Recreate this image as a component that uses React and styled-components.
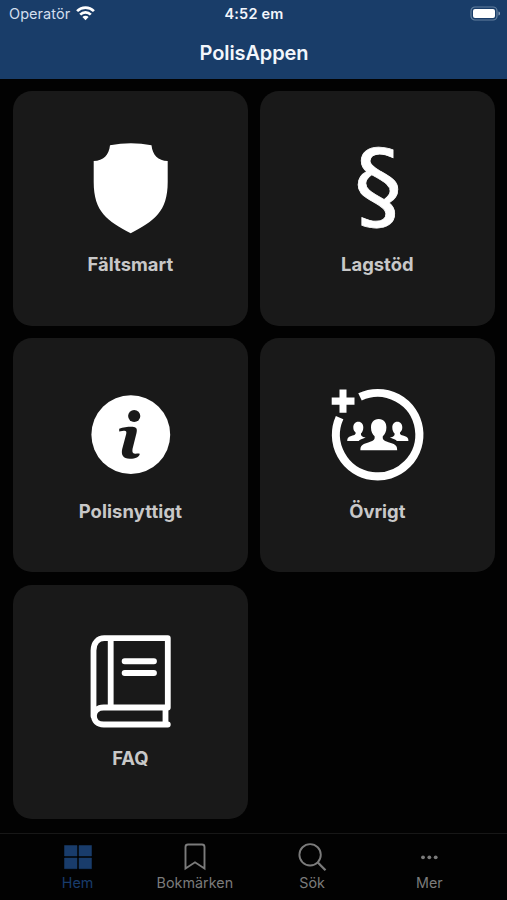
import React from "react";
import styled, { createGlobalStyle } from "styled-components";

const GlobalStyle = createGlobalStyle`
  *, *::before, *::after { box-sizing: border-box; }
  body {
    margin: 0;
    background: #020202;
    font-family: Inter, "Liberation Sans", sans-serif;
  }
`;

const Screen = styled.div`
  display: flex;
  flex-direction: column;
  width: 507px;
  height: 900px;
  overflow: hidden;
  background: #020202;
`;

const Header = styled.header`
  flex: none;
  height: 79px;
  background: #193d69;
  color: #f2f6fc;
`;

const StatusBar = styled.div`
  display: grid;
  grid-template-columns: 1fr auto 1fr;
  align-items: center;
  height: 27px;
  padding: 0 6px 0 9px;
`;

const Carrier = styled.div`
  display: flex;
  align-items: center;
  gap: 6px;
  font-size: 14.5px;
  letter-spacing: 0.05px;
  color: #d3dfee;
`;

const Clock = styled.div`
  margin-left: -2px;
  font-size: 14.5px;
  font-weight: 600;
  letter-spacing: 0.2px;
`;

const BatterySlot = styled.div`
  display: flex;
  justify-content: flex-end;
`;

const Title = styled.h1`
  margin: 0;
  padding: 12px 0 0 1px;
  text-align: center;
  font-size: 20px;
  line-height: 28px;
  font-weight: 600;
  letter-spacing: -0.1px;
`;

const Grid = styled.main`
  flex: 1;
  display: grid;
  grid-template-columns: repeat(2, 234.7px);
  grid-auto-rows: 234.3px;
  gap: 12.5px 12.3px;
  padding: 12.4px 0 0 13px;
`;

const Card = styled.button`
  display: flex;
  flex-direction: column;
  align-items: center;
  padding: 38.6px 0 0;
  border: 0;
  border-radius: 19px;
  background: #191919;
  color: #c8c8c8;
  font-family: inherit;
`;

const Glyph = styled.svg`
  display: block;
  width: 120px;
  height: 120px;
  flex: none;
  overflow: visible;
  fill: #fff;
`;

const SectionSign = styled.text`
  font-family: "DejaVu Sans", sans-serif;
  font-size: 97px;
  text-anchor: middle;
  stroke: #fff;
  stroke-width: 0.8px;
`;

const CardLabel = styled.span`
  margin-top: 2px;
  font-size: 18.4px;
  line-height: 24px;
  font-weight: 650;
  letter-spacing: ${(p) => p.$track || 0}px;
`;

const TabBar = styled.nav`
  flex: none;
  display: grid;
  grid-template-columns: repeat(4, 1fr);
  height: 67px;
  padding: 8px 19px 0;
  border-top: 1px solid #171717;
`;

const Tab = styled.a`
  display: flex;
  flex-direction: column;
  align-items: center;
  gap: 2px;
  color: ${(p) => (p.$active ? "#193c6b" : "#7b7b7b")};
  font-size: 14.3px;
  line-height: 18px;
  letter-spacing: 0.05px;
`;

const TabIcon = styled.svg`
  display: block;
  width: 30px;
  height: 30px;
  fill: none;
  stroke: currentColor;
  stroke-width: 1.9;
`;

const Wifi = () => (
  <svg width="19" height="15" viewBox="0 0 19 15" fill="none" stroke="#fff" strokeWidth="2.7">
    <path d="M1.1 5.1a12 12 0 0 1 16.8 0" />
    <path d="M4.2 8.6a7.5 7.5 0 0 1 10.6 0" />
    <path d="M9.5 14.2 6.4 11.1a4.4 4.4 0 0 1 6.2 0z" fill="#fff" stroke="none" />
  </svg>
);

const Battery = () => (
  <svg width="31" height="15" viewBox="0 0 31 15">
    <rect x="1" y="1" width="26" height="13" rx="4" fill="none" stroke="#64809f" strokeWidth="1.2" />
    <rect x="3" y="3" width="22" height="9" rx="2" fill="#fff" />
    <path d="M28.5 5.5c2 .5 2 3.5 0 4z" fill="#8ba0b9" />
  </svg>
);

const ShieldGlyph = () => (
  <Glyph viewBox="0 0 120 120">
    <path d="M40 15.3Q61 11 81.5 15.3C82.5 25 88 31 97.7 31V52C97.7 82 84 91 60.7 103.3C37.5 91 23.7 82 23.7 52V31C33.5 31 39 25 40 15.3Z" />
  </Glyph>
);

const SectionGlyph = () => (
  <Glyph viewBox="-3.2 0 120 120">
    <SectionSign x="57.7" y="89">§</SectionSign>
  </Glyph>
);

const InfoGlyph = () => (
  <Glyph viewBox="-0.2 -3 120 120">
    <circle cx="60.6" cy="54.7" r="39.4" />
    <g fill="#191919">
      <circle cx="64" cy="36" r="6.1" />
      <path d="M49 48.8C53.5 47.2 58.5 46.7 63.5 46.9C67 47.2 67 50 66.3 53L62.3 69C61.7 72.5 63 73.9 65.5 73.8C67 73.7 68 73.3 69.5 73.8C69.5 77 65 78.7 60 78.8C53 79 50.7 75 52 69L56 54C56.6 51 55.8 50.5 53.5 50.7L49 51.6Z" />
    </g>
  </Glyph>
);

const PeopleGlyph = () => (
  <Glyph viewBox="-3 -3 120 120">
    <path d="M40 16.9A41.7 41.7 0 1 1 19.6 37.6" fill="none" stroke="#fff" strokeWidth="8.2" />
    <path d="M19.5 9.5h7v8h8v7.2h-8v8h-7v-8h-7.8v-7.2h7.800z" />
    <path d="M58.7 39c5.3 0 7.7 3.7 7.7 8.4 0 4.3-1.6 7-3.6 8.9-.5 4 1.3 4.6 8 6.6 4.5 1.3 6.4 2.6 6.4 7.3H40.400c0-4.700 1.900-6 6.400-7.300 6.500-2 8.300-2.600 7.800-6.600-2-1.900-3.600-4.600-3.600-8.900 0-4.700 2.400-8.400 7.700-8.400Z" />
    <path id="side-person" d="M38.3 41.7c3.3 0 5 2.5 5 5.7 0 2.7-1 4.8-2.3 6-.2 2.5.8 3 4.7 4.2-3.5 1.4-6 1.9-7 3.3H27.200c0-3 1-4.100 4-5 4-1.100 4.600-1.700 4.400-3.500-1.300-1.200-2.300-2.300-2.300-5 0-3.200 1.700-5.700 5-5.700Z" />
    <use href="#side-person" transform="matrix(-1 0 0 1 115.6 0)" />
  </Glyph>
);

const BookGlyph = () => (
  <Glyph viewBox="-0.2 -1 120 120">
    <g fill="none" stroke="#fff" strokeWidth="5.8" strokeLinejoin="round" strokeLinecap="round">
      <path d="M23.300 91V25.500C23.300 17.500 28 13.200 34 13.200H97.600V82.500H33.500C20.500 82.500 20.500 99.500 33.500 99.500H97.600" />
      <path d="M40.500 13.500V82M95.300 83V99" strokeLinecap="butt" />
      <path d="M54.500 36.300H83.700M54.500 48H83.700" strokeWidth="6" />
    </g>
  </Glyph>
);

const cards = [
  { label: "Fältsmart", Icon: ShieldGlyph, track: 0.04 },
  { label: "Lagstöd", Icon: SectionGlyph, track: 0 },
  { label: "Polisnyttigt", Icon: InfoGlyph, track: 0.12 },
  { label: "Övrigt", Icon: PeopleGlyph, track: 0 },
  { label: "FAQ", Icon: BookGlyph, track: 0 },
];

export default function App() {
  return (
    <>
      <GlobalStyle />
      <Screen>
        <Header>
          <StatusBar>
            <Carrier>
              Operatör
              <Wifi />
            </Carrier>
            <Clock>4:52 em</Clock>
            <BatterySlot>
              <Battery />
            </BatterySlot>
          </StatusBar>
          <Title>PolisAppen</Title>
        </Header>
        <Grid>
          {cards.map(({ label, Icon, track }) => (
            <Card key={label}>
              <Icon />
              <CardLabel $track={track}>{label}</CardLabel>
            </Card>
          ))}
        </Grid>
        <TabBar>
          <Tab $active>
            <TabIcon viewBox="0 0 30 30">
              <path
                d="M1.5 3.5h12.500v10.500h-12.500zM16 3.500h12.500v10.500h-12.500zM1.500 16h12.500v10.700h-12.500zM16 16h12.500v10.700h-12.500z"
                fill="currentColor"
                stroke="currentColor"
                strokeWidth="0.5"
                strokeLinejoin="round"
              />
            </TabIcon>
            Hem
          </Tab>
          <Tab>
            <TabIcon viewBox="0 0 30 30">
              <path d="M5.5 26.5V5Q5.5 2.5 8 2.5H22Q24.5 2.5 24.5 5V26.5L15 20.3Z" />
            </TabIcon>
            Bokmärken
          </Tab>
          <Tab>
            <TabIcon viewBox="-0.5 0 30 30">
              <circle cx="12.6" cy="12.8" r="10.7" />
              <path d="M20.3 20.5 28 28.2" strokeWidth="2.3" />
            </TabIcon>
            Sök
          </Tab>
          <Tab>
            <TabIcon viewBox="-0.5 0 30 30">
              <g fill="currentColor" stroke="none">
                <circle cx="8.5" cy="15.3" r="1.9" />
                <circle cx="14.8" cy="15.3" r="1.9" />
                <circle cx="21.2" cy="15.3" r="1.9" />
              </g>
            </TabIcon>
            Mer
          </Tab>
        </TabBar>
      </Screen>
    </>
  );
}
